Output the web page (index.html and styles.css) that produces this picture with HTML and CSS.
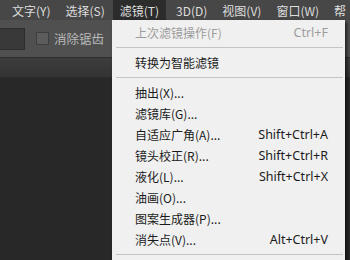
FILE: index.html
```html
<!DOCTYPE html>
<html lang="zh-CN">
<head>
    <meta charset="UTF-8">
    <title>滤镜菜单</title>
    <link rel="stylesheet" href="styles.css">
</head>
<body>
    <div class="app">
        <div class="menubar">
            <span class="menubar-item">文字(Y)</span>
            <span class="menubar-item">选择(S)</span>
            <span class="menubar-item active">滤镜(T)</span>
            <span class="menubar-item">3D(D)</span>
            <span class="menubar-item">视图(V)</span>
            <span class="menubar-item">窗口(W)</span>
            <span class="menubar-item">帮</span>
        </div>

        <div class="options">
            <div class="field"></div>
            <label class="check">
                <span class="box"></span>
                <span>消除锯齿</span>
            </label>
        </div>

        <div class="tabs"></div>
        <div class="workspace"></div>

        <ul class="menu">
            <li class="item disabled"><span>上次滤镜操作(F)</span><span class="key">Ctrl+F</span></li>
            <li class="sep"></li>
            <li class="item"><span>转换为智能滤镜</span></li>
            <li class="sep"></li>
            <li class="item"><span>抽出(X)...</span></li>
            <li class="item"><span>滤镜库(G)...</span></li>
            <li class="item"><span>自适应广角(A)...</span><span class="key">Shift+Ctrl+A</span></li>
            <li class="item"><span>镜头校正(R)...</span><span class="key">Shift+Ctrl+R</span></li>
            <li class="item"><span>液化(L)...</span><span class="key">Shift+Ctrl+X</span></li>
            <li class="item"><span>油画(O)...</span></li>
            <li class="item"><span>图案生成器(P)...</span></li>
            <li class="item"><span>消失点(V)...</span><span class="key">Alt+Ctrl+V</span></li>
            <li class="sep"></li>
        </ul>
    </div>
</body>
</html>
```

FILE: styles.css
```css
html, body {
    margin: 0;
    height: 100%;
    overflow: hidden;
}

body {
    font-family: "Noto Sans CJK SC", "Noto Sans", sans-serif;
    font-size: 12px;
    background: #282828;
}

.app {
    position: relative;
    height: 260px;
    display: flex;
    flex-direction: column;
}

.menubar {
    height: 20px;
    display: flex;
    align-items: stretch;
    padding-left: 5px;
    background: #474747;
    color: #dedede;
    white-space: nowrap;
    overflow: hidden;
}

.menubar-item {
    display: flex;
    align-items: center;
    padding: 0 7px;
    margin-right: 1px;
}

.menubar-item.active {
    background: #2c2c2c;
}

.menubar-item.active + .menubar-item {
    margin-left: 2px;
}

.options {
    height: 37px;
    display: flex;
    align-items: center;
    background: #505050;
    border-bottom: 1px solid #2e2e2e;
}

.field {
    width: 24px;
    height: 20px;
    background: #393939;
    border: 1px solid #2c2c2c;
    border-left: none;
}

.check {
    display: flex;
    align-items: center;
    gap: 5px;
    margin-left: 11px;
    color: #b9b9b9;
    font-size: 12.5px;
}

.box {
    width: 11px;
    height: 11px;
    background: #5c5c5c;
    border: 1px solid #3e3e3e;
}

.tabs {
    height: 19px;
    background: linear-gradient(#3d3d3d, #333);
    border-bottom: 1px solid #2b2b2b;
}

.workspace {
    flex: 1;
    background: #282828;
}

.menu {
    position: absolute;
    left: 112px;
    top: 20px;
    width: 233px;
    height: 240px;
    margin: 0;
    padding: 2px 0 0;
    list-style: none;
    background: #f0f0f0;
    box-shadow: 2px 2px 3px rgba(0, 0, 0, 0.6);
    color: #1b1b1b;
}

.item {
    height: 21px;
    display: flex;
    align-items: center;
    justify-content: space-between;
    padding: 0 17px 0 23px;
    white-space: nowrap;
}

.item.disabled {
    color: #9c9c9c;
}

.key {
    font-family: "Noto Sans", sans-serif;
    font-size: 12.5px;
}

.sep {
    height: 1px;
    margin: 4px 2px 4px 4px;
    background: #c4c4c4;
}
```
